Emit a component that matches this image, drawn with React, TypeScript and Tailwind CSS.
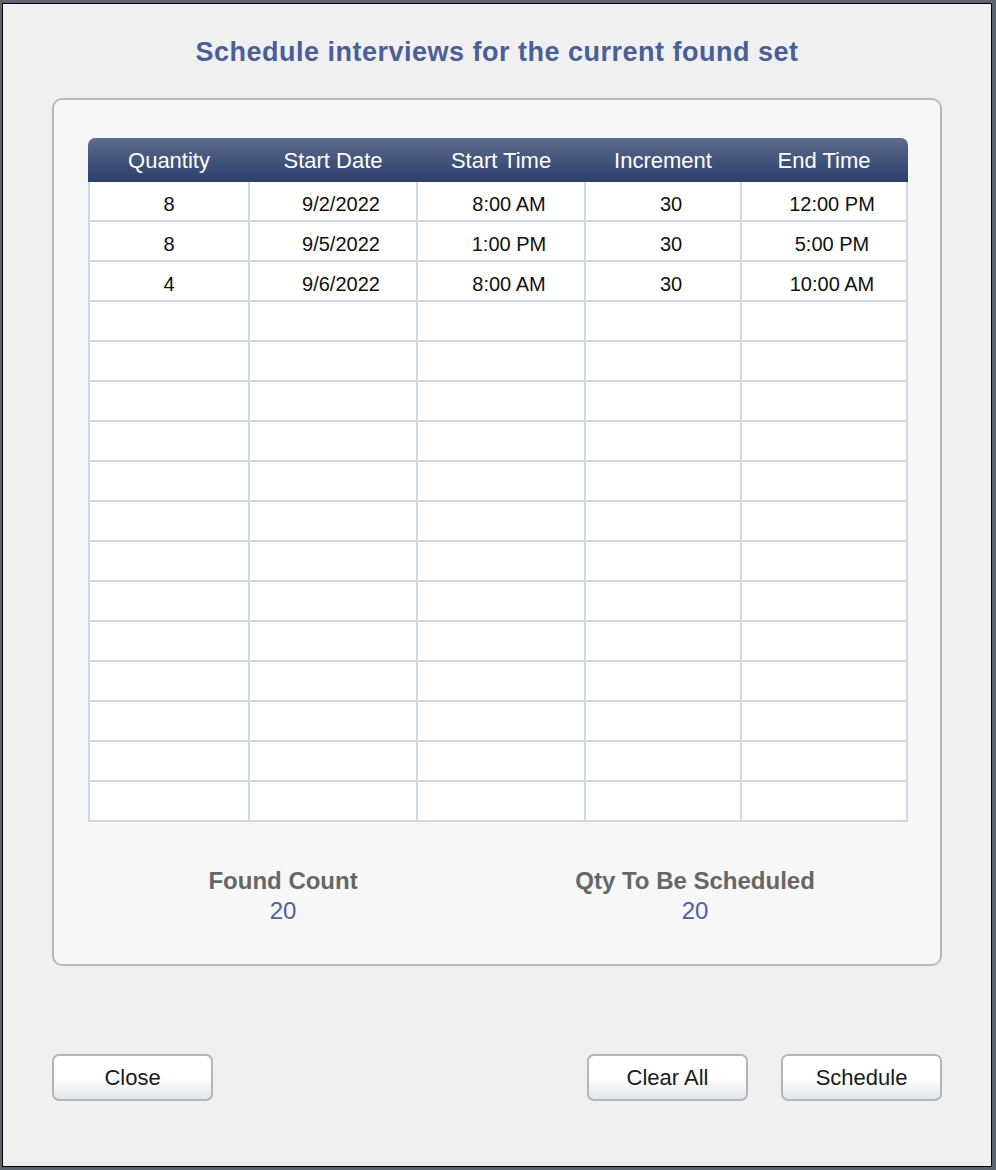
import React from "react";

const columns = [
  { label: "Quantity", width: "w-[158px]", pad: "" },
  { label: "Start Date", width: "w-[166px]", pad: "pl-4" },
  { label: "Start Time", width: "w-[166px]", pad: "pl-4" },
  { label: "Increment", width: "w-[154px]", pad: "pl-4" },
  { label: "End Time", width: "w-[164px]", pad: "pl-4" },
];

const rows: string[][] = [
  ["8", "9/2/2022", "8:00 AM", "30", "12:00 PM"],
  ["8", "9/5/2022", "1:00 PM", "30", "5:00 PM"],
  ["4", "9/6/2022", "8:00 AM", "30", "10:00 AM"],
];

const TOTAL_ROWS = 16;

function DialogButton({ children }: { children: React.ReactNode }) {
  return (
    <button className="w-[161px] h-[47px] rounded-[7px] border-2 border-[#b3b5b9] bg-gradient-to-b from-white via-white to-[#e4e5e9] text-[22px] text-[#1a1a1a] leading-none">
      {children}
    </button>
  );
}

export default function App() {
  const allRows = Array.from({ length: TOTAL_ROWS }, (_, i) => rows[i] ?? ["", "", "", "", ""]);

  return (
    <div
      className="w-[996px] h-[1170px] bg-[#5d6170] pt-[3px] pl-[2px]"
      style={{ fontFamily: '"Liberation Sans", Arial, sans-serif' }}
    >
      <div className="w-[990px] h-[1164px] border border-black bg-[#f0f0f0] flex flex-col">
        {/* Title */}
        <div className="h-[94px] flex items-center justify-center pt-[2px]">
          <h1 className="text-[27px] font-bold text-[#4a5f98] tracking-[0.5px]">
            Schedule interviews for the current found set
          </h1>
        </div>

        {/* Panel */}
        <div className="ml-[49px] w-[890px] h-[868px] rounded-[10px] border-2 border-[#b8b8b8] bg-[#f7f7f7] pt-[38px] pl-[34px]">
          <div className="w-[820px]">
            {/* Header */}
            <div className="h-[44px] rounded-t-[7px] bg-gradient-to-b from-[#5e6b8b] to-[#2b3f6c] flex px-[2px] gap-[2px]">
              {columns.map((c) => (
                <div
                  key={c.label}
                  className={`${c.width} flex items-center justify-center text-[22px] text-white`}
                >
                  {c.label}
                </div>
              ))}
            </div>
            {/* Body */}
            <div className="bg-[#cfd8e6] p-[2px] pt-0 flex flex-col gap-[2px]">
              {allRows.map((r, ri) => (
                <div key={ri} className="flex gap-[2px] h-[38px]">
                  {r.map((v, ci) => (
                    <div
                      key={ci}
                      className={`${columns[ci].width} ${columns[ci].pad} bg-white flex items-center justify-center pt-[6px] text-[20px] text-[#111]`}
                    >
                      {v}
                    </div>
                  ))}
                </div>
              ))}
            </div>
          </div>

          {/* Counts */}
          <div className="flex mt-[44px] w-[820px]">
            <div className="w-[392px] flex flex-col items-center">
              <div className="text-[24px] font-bold text-[#666] leading-[30px]">Found Count</div>
              <div className="text-[24px] text-[#4a62a0] leading-[30px]">20</div>
            </div>
            <div className="w-[432px] flex flex-col items-center pl-[4px]">
              <div className="text-[24px] font-bold text-[#666] leading-[30px]">Qty To Be Scheduled</div>
              <div className="text-[24px] text-[#4a62a0] leading-[30px]">20</div>
            </div>
          </div>
        </div>

        {/* Buttons */}
        <div className="mt-[88px] ml-[49px] w-[890px] flex items-center">
          <DialogButton>Close</DialogButton>
          <div className="flex-1" />
          <div className="flex gap-[33px]">
            <DialogButton>Clear All</DialogButton>
            <DialogButton>Schedule</DialogButton>
          </div>
        </div>
      </div>
    </div>
  );
}
